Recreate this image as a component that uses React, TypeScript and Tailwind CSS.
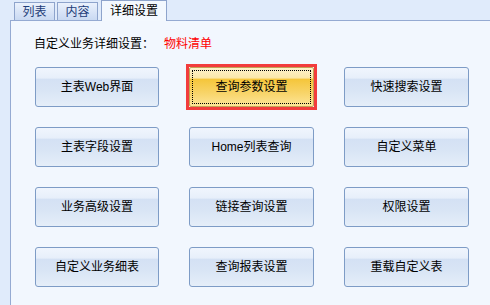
const font = { fontFamily: '"Liberation Sans", "Noto Sans CJK SC", sans-serif' };

const rows: string[][] = [
  ['主表Web界面', '查询参数设置', '快速搜索设置'],
  ['主表字段设置', 'Home列表查询', '自定义菜单'],
  ['业务高级设置', '链接查询设置', '权限设置'],
  ['自定义业务细表', '查询报表设置', '重载自定义表'],
];

function Tab({ label, active }: { label: string; active?: boolean }) {
  if (active) {
    return (
      <div className="relative z-10 -mb-px ml-[1px] flex h-[21px] w-[66px] items-center justify-center border border-b-0 border-[#8ea4cc] bg-[#f3f8fe] text-[12px] text-black">
        {label}
      </div>
    );
  }
  return (
    <div className="mr-[2px] flex h-[18px] w-[41px] items-center justify-center border border-b-0 border-[#8ea4cc] bg-[linear-gradient(to_bottom,#eaf1fc,#c9d9f2)] text-[12px] text-[#1d3c78]">
      {label}
    </div>
  );
}

function SettingButton({ label, focused }: { label: string; focused?: boolean }) {
  if (focused) {
    return (
      <div className="h-[40px] outline outline-[3px] outline-[#f23c3c]">
        <div className="flex h-full items-center justify-center rounded-[2px] border border-[#c4a255] bg-[linear-gradient(to_bottom,#fdf2cb_0%,#fbe8aa_26%,#f5c63b_30%,#f8d468_65%,#fde598_100%)] p-[2px] text-[12px] text-black">
          <div className="flex h-full w-full items-center justify-center border border-dotted border-black">{label}</div>
        </div>
      </div>
    );
  }
  return (
    <div className="flex h-[40px] items-center justify-center rounded-[3px] border border-[#7e9cc6] bg-[linear-gradient(to_bottom,#f0f5fd_0%,#e7effa_26%,#d4e1f4_30%,#d9e5f5_60%,#e5eef9_100%)] text-[12px] text-black">
      {label}
    </div>
  );
}

export default function App() {
  return (
    <div className="h-[305px] w-[490px] overflow-hidden bg-[#e0ebfb]" style={font}>
      <div className="flex h-[20px] items-end pl-[14px]">
        <Tab label="列表" />
        <Tab label="内容" />
        <Tab label="详细设置" active />
      </div>
      <div className="ml-[10px] h-[285px] border-l border-t border-[#95aad2] bg-[#f2f7fe] pl-[23px] pt-[15px]">
        <div className="flex h-[16px] items-center text-[12px] text-black">
          <span>自定义业务详细设置：</span>
          <span className="ml-[10px] text-[#ff0000]">物料清单</span>
        </div>
        <div className="ml-[1px] mt-[15px] grid grid-cols-[124px_125px_125px] gap-x-[30px] gap-y-[20px]">
          {rows.flat().map((label) => (
            <SettingButton key={label} label={label} focused={label === '查询参数设置'} />
          ))}
        </div>
      </div>
    </div>
  );
}
